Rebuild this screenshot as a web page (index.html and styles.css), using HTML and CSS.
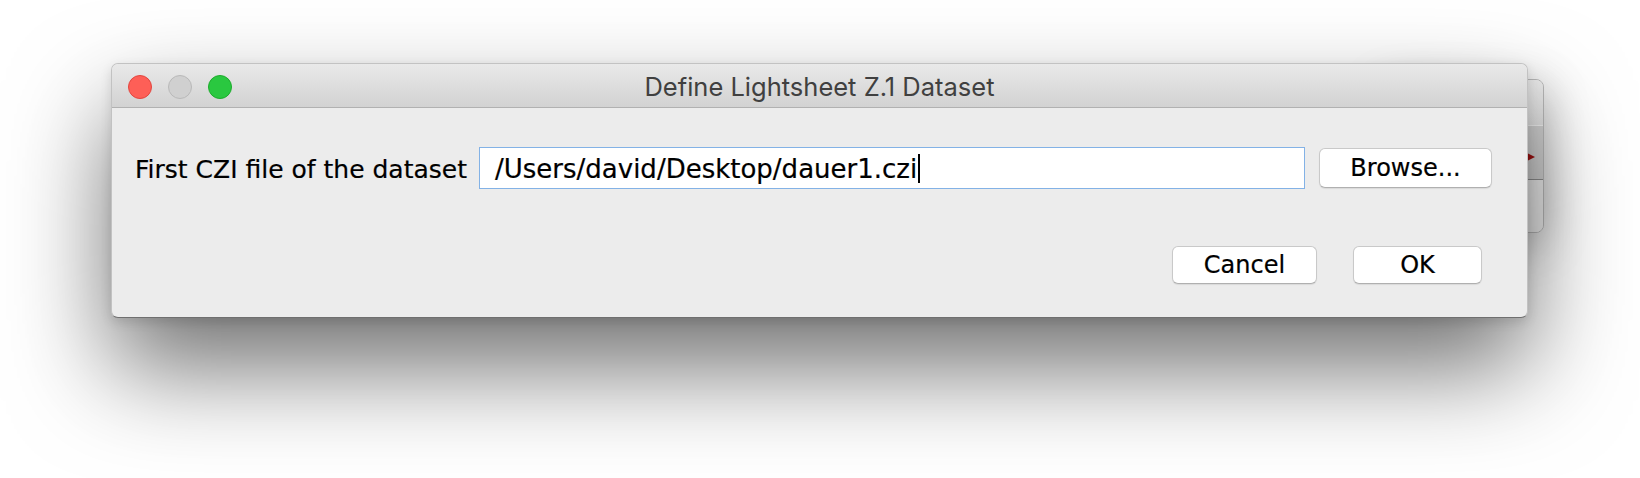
FILE: index.html
```html
<!DOCTYPE html>
<html>
<head>
<meta charset="utf-8">
<link rel="stylesheet" href="styles.css">
</head>
<body>
<div class="desktop">
  <div class="back-window">
    <div class="back-title"></div>
    <div class="back-band"><span class="back-arrow"></span></div>
    <div class="back-body"></div>
  </div>
  <div class="window">
    <div class="titlebar">
      <div class="lights">
        <span class="light red"></span>
        <span class="light gray"></span>
        <span class="light green"></span>
      </div>
      <div class="title">Define Lightsheet Z.1 Dataset</div>
    </div>
    <div class="content">
      <div class="file-row">
        <label class="label">First CZI file of the dataset</label>
        <div class="field"><span class="field-text">/Users/david/Desktop/dauer1.czi</span><span class="caret"></span></div>
        <button class="btn browse">Browse...</button>
      </div>
      <div class="actions">
        <button class="btn cancel">Cancel</button>
        <button class="btn ok">OK</button>
      </div>
    </div>
  </div>
</div>
</body>
</html>
```
FILE: styles.css
```css
html, body {
  margin: 0;
  padding: 0;
  background: #ffffff;
  width: 1640px;
  height: 478px;
  overflow: hidden;
}

.desktop {
  position: relative;
  width: 1640px;
  height: 478px;
  padding: 63px 0 0 111px;
  box-sizing: border-box;
}

.back-window {
  position: absolute;
  left: 1380px;
  top: 79px;
  width: 164px;
  height: 154px;
  box-sizing: border-box;
  border: 1px solid #b8b8b8;
  border-radius: 8px;
  background: #ebebeb;
  box-shadow: 0 10px 45px rgba(0, 0, 0, 0.28);
  display: flex;
  flex-direction: column;
  overflow: hidden;
}

.back-title {
  height: 45px;
  background: linear-gradient(#ececec, #e0e0e0);
}

.back-band {
  position: relative;
  height: 55px;
  background: #d0d0d0;
  border-top: 1px solid #f0f0f0;
  border-bottom: 1px solid #8f8f8f;
  box-sizing: border-box;
}

.back-arrow {
  position: absolute;
  left: 146px;
  top: 27px;
  width: 0;
  height: 0;
  border-left: 8px solid #a01010;
  border-top: 4px solid transparent;
  border-bottom: 4px solid transparent;
}

.back-body {
  flex: 1;
  background: #ececec;
}

.window {
  position: relative;
  width: 1417px;
  height: 255px;
  box-sizing: border-box;
  border: 1px solid #c2c2c2;
  border-bottom-color: #6f6f6f;
  border-radius: 7px;
  background: #ececec;
  box-shadow: 0 50px 100px rgba(0, 0, 0, 0.56), 0 4px 12px rgba(0, 0, 0, 0.12);
  overflow: hidden;
  display: flex;
  flex-direction: column;
}

.titlebar {
  position: relative;
  height: 44px;
  box-sizing: border-box;
  background: linear-gradient(#e9e9e9, #d2d2d2);
  border-bottom: 1px solid #b1b1b1;
  display: flex;
  align-items: center;
  justify-content: center;
}

.lights {
  position: absolute;
  left: 16px;
  top: 11px;
  display: flex;
  gap: 16px;
}

.light {
  width: 24px;
  height: 24px;
  border-radius: 50%;
  box-sizing: border-box;
}

.light.red {
  background: #fe5f57;
  border: 1px solid #e2463f;
}

.light.gray {
  background: #d0d0d0;
  border: 1px solid #b9b9b9;
}

.light.green {
  background: #2ac840;
  border: 1px solid #1dac2c;
}

.title {
  font-family: Inter, "Liberation Sans", Arial, sans-serif;
  font-size: 25.5px;
  color: #404040;
  padding-top: 2px;
}

.content {
  flex: 1;
  display: flex;
  flex-direction: column;
  padding: 39px 35px 0 23px;
}

.file-row {
  display: flex;
  align-items: center;
}

.label {
  font-family: "DejaVu Sans", sans-serif;
  font-size: 25px;
  color: #000;
  width: 344px;
  white-space: nowrap;
  -webkit-text-stroke: 0.2px #000;
  padding-top: 2px;
}

.field {
  width: 826px;
  height: 42px;
  box-sizing: border-box;
  border: 1px solid #83b2e6;
  background: #fff;
  display: flex;
  align-items: center;
  padding-left: 15px;
  padding-top: 1px;
  font-family: "DejaVu Sans", sans-serif;
  font-size: 26px;
  color: #000;
  white-space: nowrap;
  -webkit-text-stroke: 0.2px #000;
}

.caret {
  display: inline-block;
  width: 2px;
  height: 29px;
  background: #000;
  margin-left: 1px;
}

.btn {
  font-family: "DejaVu Sans", sans-serif;
  font-size: 24px;
  color: #000;
  background: #fff;
  border: 1px solid #c9c9c9;
  border-bottom-color: #b0b0b0;
  border-radius: 6px;
  box-shadow: 0 1px 1px rgba(0, 0, 0, 0.08);
  padding: 0;
  margin: 0;
  box-sizing: border-box;
  -webkit-text-stroke: 0.2px #000;
}

.browse {
  width: 173px;
  height: 40px;
  margin-left: 14px;
}

.actions {
  display: flex;
  justify-content: flex-end;
  gap: 36px;
  margin-top: 57px;
  padding-right: 10px;
}

.cancel {
  width: 145px;
  height: 38px;
}

.ok {
  width: 129px;
  height: 38px;
}
```
